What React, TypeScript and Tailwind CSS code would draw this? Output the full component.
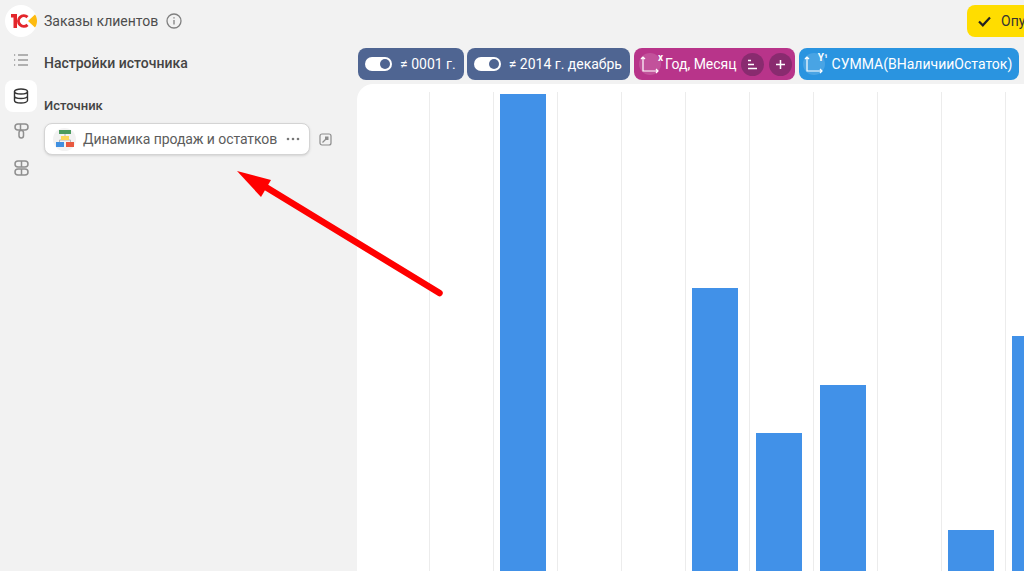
const font = { fontFamily: 'Roboto, sans-serif' }

// bar height in px per chart column, null = empty month
const bars: (number | null)[] = [null, 477, null, null, 283, 138, 186, null, 41, 235]

function Toggle() {
  return (
    <span className="flex h-[14px] w-[27px] shrink-0 items-center justify-end rounded-full bg-white pr-[2px]">
      <span className="h-[10px] w-[10px] rounded-full bg-[#4f6592]" />
    </span>
  )
}

function FilterChip({ label }: { label: string }) {
  return (
    <div className="flex h-8 shrink-0 items-center gap-2 rounded-lg bg-[#4f6592] pl-[7px] pr-2 text-[14px] text-white">
      <Toggle />
      <span>{label}</span>
    </div>
  )
}

function AxisIcon({ letter, right }: { letter: string; right: string }) {
  return (
    <span className="relative flex h-[22px] w-[22px] shrink-0 items-center justify-center rounded-full bg-white/15">
      <svg width="22" height="22" viewBox="0 0 22 22" fill="none" stroke="white" strokeWidth="1.2">
        <path d="M4 4v14h15M17 16l2 2-2 2M2 6l2-2 2 2" />
      </svg>
      <span className={`absolute top-0 text-[10px] font-bold leading-none ${right}`}>{letter}</span>
    </span>
  )
}

export default function App() {
  return (
    <div style={font} className="relative h-[571px] w-[1024px] overflow-hidden bg-[#f2f2f2] text-[#4d4d4d]">
      {/* Header */}
      <header className="flex h-[44px] items-start pl-[5px] pt-[5px]">
        <div className="relative h-8 w-8 shrink-0 rounded-full bg-white">
          <svg className="absolute left-[5px] top-[8px]" width="28" height="16" viewBox="0 0 28 16">
            <path d="M1 1h6v14H3.500V4.500H1z" fill="#e3262b" />
            <path d="M17.500 4.200A5.300 5.300 0 1 0 17.500 11.800" fill="none" stroke="#e3262b" strokeWidth="3" />
            <path d="M18 8L25 1.500c1.500 2 2 4.200 2 6.500s-.5 4.500-2 6.500z" fill="#fdbb11" />
          </svg>
        </div>
        <span className="ml-[7px] text-[14px] leading-[32px]">Заказы клиентов</span>
        <svg className="ml-2 mt-2 shrink-0" width="16" height="16" viewBox="0 0 16 16" fill="none" stroke="#808080" strokeWidth="1.300">
          <circle cx="8" cy="8" r="7" />
          <path d="M8 7v4.500M8 4.200v1.200" />
        </svg>
        <div className="ml-auto flex h-8 w-[57px] shrink-0 items-center gap-[10px] overflow-hidden rounded-l-lg bg-[#ffdd00] pl-[11px] text-[14px] whitespace-nowrap text-[#333]">
          <svg className="shrink-0" width="13" height="11" viewBox="0 0 13 11" fill="none" stroke="#222" strokeWidth="2.200">
            <path d="M1 5.500l3.800 3.800L12 1.500" />
          </svg>
          <span>Опубликовать</span>
        </div>
      </header>

      <div className="flex h-[527px]">
        {/* Icon rail */}
        <nav className="flex w-[37px] shrink-0 flex-col items-center pl-[5px]">
          <div className="flex h-8 w-8 items-center justify-center">
            <svg width="16" height="14" viewBox="0 0 16 14" fill="none" stroke="#9a9a9a" strokeWidth="1.300">
              <path d="M5 2h10M5 7h10M5 12h10M1 2h1.200M1 7h1.200M1 12h1.200" />
            </svg>
          </div>
          <div className="mt-1 flex h-8 w-8 items-center justify-center rounded-lg bg-white">
            <svg width="16" height="16" viewBox="0 0 16 16" fill="none" stroke="#333" strokeWidth="1.400">
              <ellipse cx="8" cy="3.500" rx="6.500" ry="2.500" />
              <path d="M1.500 3.500v9c0 1.400 3 2.500 6.500 2.500s6.500-1.100 6.500-2.500v-9M1.500 8c0 1.400 3 2.500 6.500 2.500s6.500-1.100 6.500-2.500" />
            </svg>
          </div>
          <div className="mt-2 flex h-[22px] w-8 items-center justify-center">
            <svg width="15" height="16" viewBox="0 0 15 16" fill="none" stroke="#8f8f8f" strokeWidth="1.500">
              <rect x="1" y="1" width="13" height="6" rx="3" />
              <path d="M6.500 1v6" />
              <rect x="5" y="7.500" width="4.500" height="7.500" rx="2.200" />
            </svg>
          </div>
          <div className="mt-[15px] flex h-[22px] w-8 items-center justify-center">
            <svg width="15" height="16" viewBox="0 0 15 16" fill="none" stroke="#8f8f8f" strokeWidth="1.500">
              <rect x="1" y="1" width="13" height="6" rx="3" />
              <rect x="1" y="9" width="13" height="6" rx="3" />
              <path d="M7.500 1v6M7.500 9v6" />
            </svg>
          </div>
        </nav>

        {/* Source settings panel */}
        <aside className="w-[320px] shrink-0 pl-[7px]">
          <h2 className="mt-[10px] text-[14px] font-medium leading-[18px] text-[#444]">Настройки источника</h2>
          <div className="mt-[26px] text-[13px] font-medium leading-4 text-[#444]">Источник</div>
          <div className="mt-[9px] flex items-center">
            <div className="flex h-8 w-[266px] items-center rounded-lg border border-[#d4d4d4] bg-white pl-[8px] pr-[9px] shadow-sm">
              <span className="flex h-[23px] w-[23px] shrink-0 items-center justify-center rounded-full bg-[#f2f2f2]">
                <svg width="18" height="18" viewBox="0 0 18 18">
                  <path d="M9 3v4M3.500 13V10h11v3" fill="none" stroke="#b5b5b5" strokeWidth="1" />
                  <rect x="3" y="0" width="12" height="4" fill="#4b9b5e" />
                  <rect x="5" y="6" width="8" height="4" fill="#fbd75b" />
                  <rect x="0" y="12" width="8" height="5" fill="#3f8fe0" />
                  <rect x="10" y="12" width="8" height="5" fill="#e8583f" />
                </svg>
              </span>
              <span className="ml-[7px] whitespace-nowrap text-[14px] tracking-[-0.08px] text-[#5c5c5c]">Динамика продаж и остатков</span>
              <svg className="ml-auto shrink-0" width="14" height="4" viewBox="0 0 14 4" fill="#777">
                <circle cx="2" cy="2" r="1.300" />
                <circle cx="7" cy="2" r="1.300" />
                <circle cx="12" cy="2" r="1.300" />
              </svg>
            </div>
            <svg className="ml-[9px] shrink-0" width="13" height="13" viewBox="0 0 13 13" fill="none" stroke="#8c8c8c" strokeWidth="1.200">
              <rect x="1" y="1" width="11" height="11" rx="2" />
              <path d="M3.500 9.500L7 6" />
              <rect x="6" y="3.500" width="3.500" height="3.500" fill="#8c8c8c" stroke="none" />
            </svg>
          </div>
        </aside>

        {/* Main area */}
        <main className="min-w-0 flex-1">
          <div className="flex h-[40px] items-start gap-[3px] pt-[4px] pl-[1px] whitespace-nowrap">
            <FilterChip label="≠ 0001 г." />
            <FilterChip label="≠ 2014 г. декабрь" />
            <div className="ml-px flex h-8 shrink-0 items-center rounded-lg bg-[#b8348a] pl-[5px] pr-[3px] text-[14px] text-white">
              <AxisIcon letter="x" right="-right-[2px]" />
              <span className="ml-1">Год, Месяц</span>
              <span className="ml-1 flex h-[23px] w-[23px] items-center justify-center rounded-full bg-[#892b6f]">
                <svg width="11" height="11" viewBox="0 0 11 11" stroke="white" strokeWidth="1.300">
                  <path d="M1 1.500h3M1 5.500h6M1 9.500h9" />
                </svg>
              </span>
              <span className="ml-[5px] flex h-[23px] w-[23px] items-center justify-center rounded-full bg-[#892b6f]">
                <svg width="11" height="11" viewBox="0 0 11 11" stroke="white" strokeWidth="1.500">
                  <path d="M5.500 1v9M1 5.500h9" />
                </svg>
              </span>
            </div>
            <div className="ml-px flex h-8 shrink-0 items-center rounded-lg bg-[#2a94e0] pl-1 pr-[7px] text-[14px] text-white">
              <AxisIcon letter="Y¹" right="-right-[3px]" />
              <span className="ml-[7px]">СУММА(ВНаличииОстаток)</span>
            </div>
          </div>

          {/* Chart */}
          <div className="h-[487px] overflow-hidden rounded-tl-2xl bg-white pt-2">
            <div className="flex h-full items-stretch">
              <div className="w-[72px] shrink-0" />
              {bars.map((height, i) => (
                <div key={i} className="flex w-16 shrink-0 flex-col justify-end border-l border-[#ececec] pl-[6px]">
                  {height !== null && <div className="w-[46px] bg-[#4191e8]" style={{ height }} />}
                </div>
              ))}
            </div>
          </div>
        </main>
      </div>

      {/* Annotation arrow */}
      <svg className="pointer-events-none absolute left-0 top-0" width="1024" height="571" viewBox="0 0 1024 571">
        <path d="M439.500 293 L264 186" stroke="#ff0000" strokeWidth="6.500" strokeLinecap="round" fill="none" />
        <path d="M237 171 L271 180 L261 197 Z" fill="#ff0000" />
      </svg>
    </div>
  )
}
